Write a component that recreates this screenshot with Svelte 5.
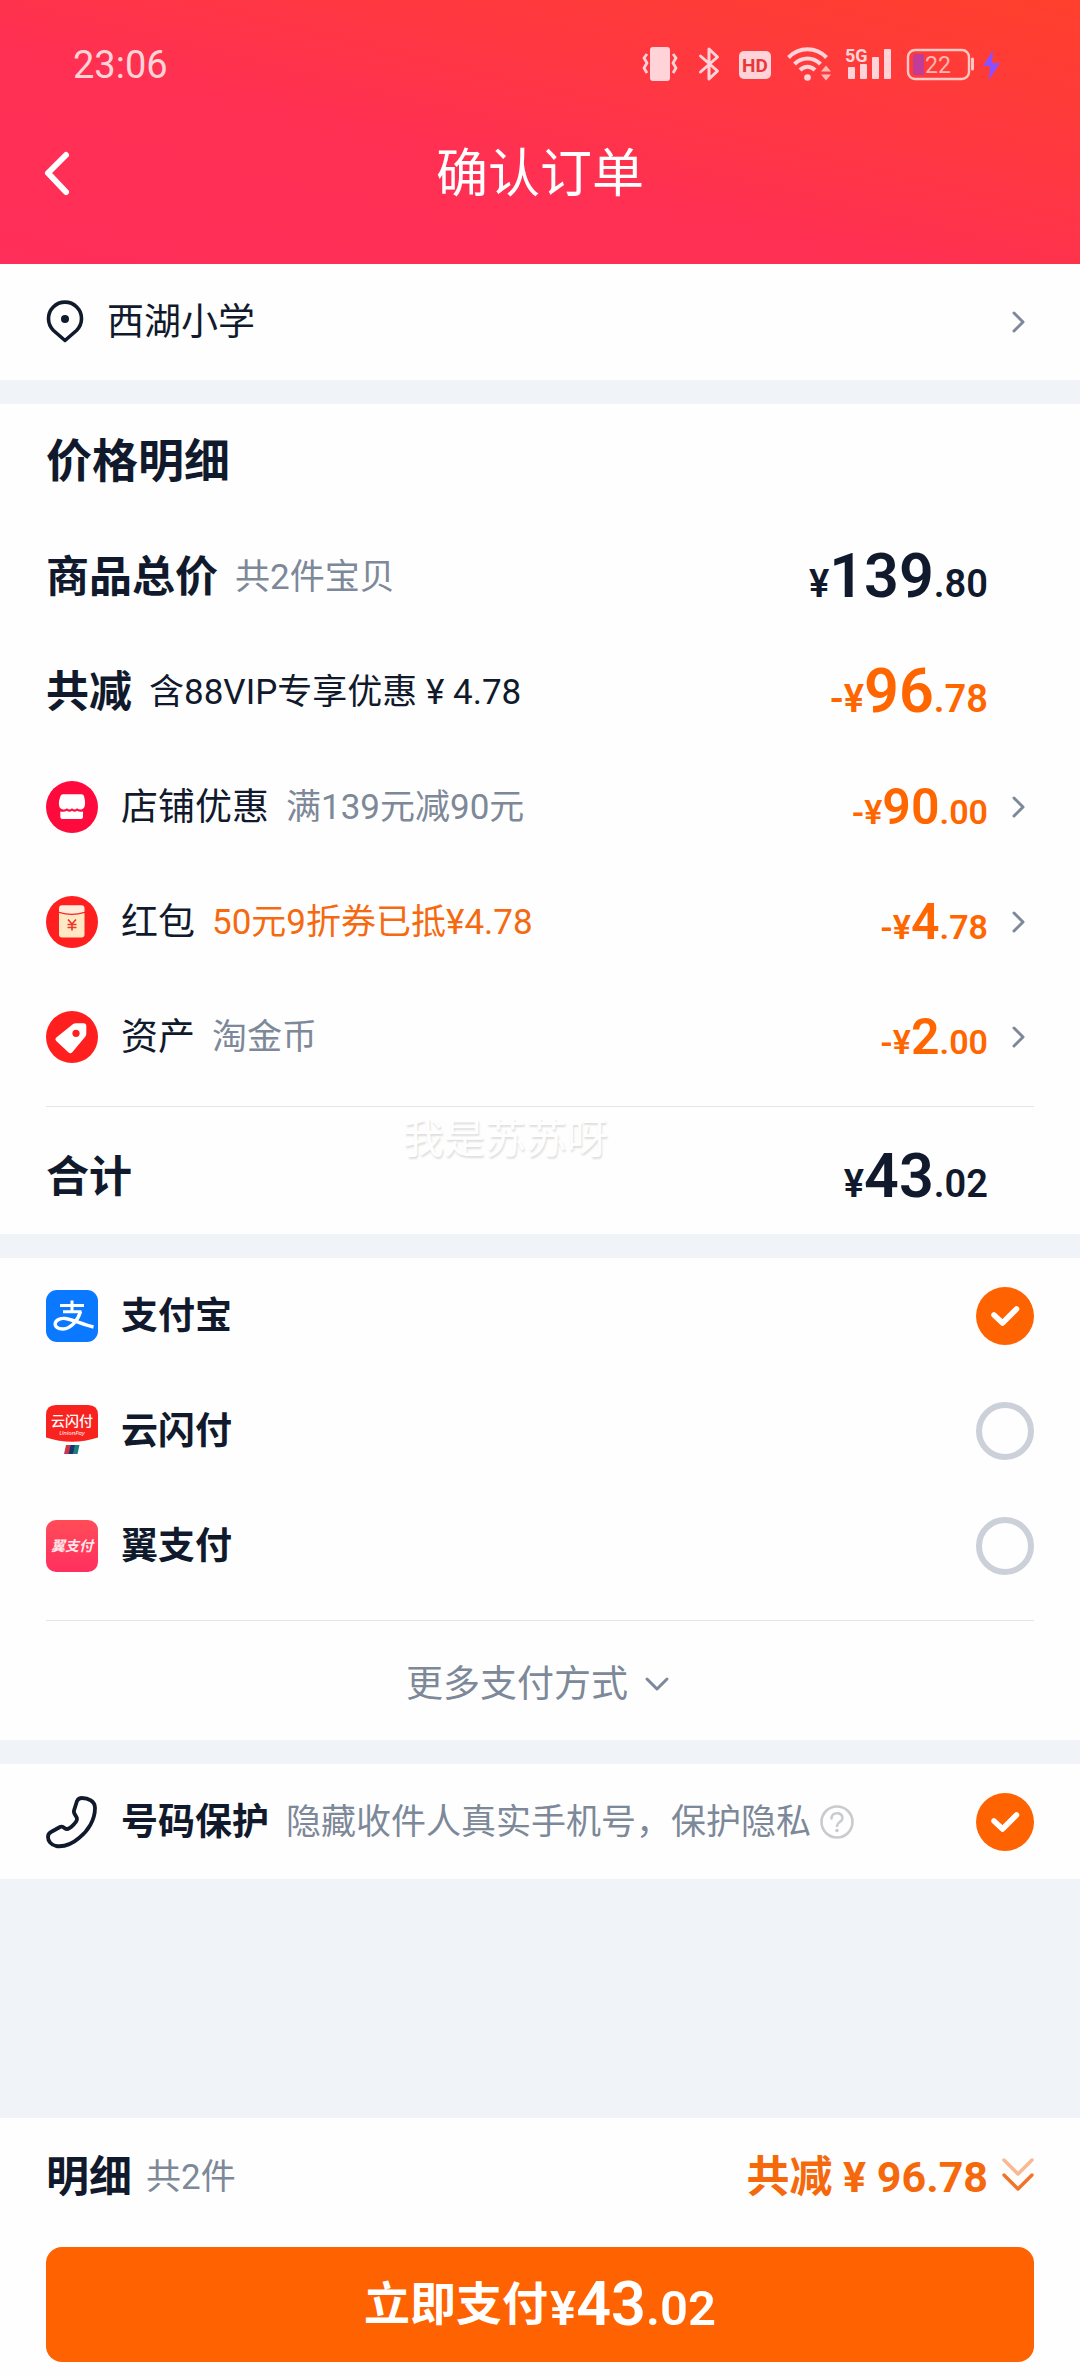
<script>
  const discounts = [
    { icon: 'shop', name: '店铺优惠', note: '满139元减90元', whole: '90', cents: '.00' },
    { icon: 'packet', name: '红包', note: '50元9折券已抵¥4.78', hot: true, whole: '4', cents: '.78' },
    { icon: 'tag', name: '资产', note: '淘金币', whole: '2', cents: '.00' }
  ];
  const methods = [
    { id: 'alipay', name: '支付宝' },
    { id: 'unionpay', name: '云闪付' },
    { id: 'bestpay', name: '翼支付' }
  ];
  let selected = $state('alipay');
  let protect = $state(true);
</script>

{#snippet chevron()}
  <svg class="chevron" viewBox="0 0 14 22" aria-hidden="true">
    <path d="M2 2l9 9-9 9" fill="none" stroke="#7d8898" stroke-width="3" stroke-linecap="round" stroke-linejoin="round" />
  </svg>
{/snippet}

<div class="page">
  <header>
    <div class="status">
      <time>23:06</time>
      <div class="indicators">
        <svg width="41" height="36" viewBox="0 0 41 36" aria-hidden="true">
          <rect x="8" y="1" width="20" height="34" rx="3" fill="#ffd3d7" />
          <path d="M5 8l-3 4 3 5-3 5 3 5M31 8l3 4-3 5 3 5-3 5" fill="none" stroke="#ffd3d7" stroke-width="2.800" stroke-linejoin="round" />
        </svg>
        <svg width="24" height="36" viewBox="0 0 24 36" aria-hidden="true">
          <path d="M1.500 10L18.500 25l-8.500 8V3l8.500 8L1.500 26" fill="none" stroke="#ffd3d7" stroke-width="3" stroke-linejoin="round" stroke-linecap="round" />
        </svg>
        <svg width="32" height="36" viewBox="0 0 32 36" aria-hidden="true">
          <rect y="5" width="32" height="28" rx="5" fill="#ffd3d7" />
          <text x="16" y="26" text-anchor="middle" font-family="Roboto" font-weight="700" font-size="19" fill="#e8383a">HD</text>
        </svg>
        <svg width="42" height="36" viewBox="0 0 42 36" aria-hidden="true">
          <g fill="none" stroke="#ffd3d7" stroke-width="4">
            <path d="M1.500 11.500C12 .5 29 .5 39.500 11.500" />
            <path d="M7.500 18C15 10.500 26 10.500 33.500 18" />
            <path d="M13 24C17.500 19.500 23.500 19.500 28 24" />
          </g>
          <circle cx="20.500" cy="31.500" r="3.300" fill="#ffd3d7" />
          <path d="M34 25.500l5-6 5 6zM34 28.500l5 6 5-6z" fill="#ffb9b4" />
        </svg>
        <svg width="46" height="36" viewBox="0 0 46 36" aria-hidden="true">
          <text x="0" y="16" font-family="Roboto" font-weight="700" font-size="18" fill="#ffd3d7">5G</text>
          <g fill="#ffd3d7">
            <rect x="3" y="21" width="7" height="12" rx="1" />
            <rect x="15" y="18" width="7" height="15" rx="1" />
            <rect x="27" y="11" width="7" height="22" rx="1" />
            <rect x="39" y="3" width="7" height="30" rx="1" />
          </g>
        </svg>
        <svg width="94" height="36" viewBox="0 0 94 36" aria-hidden="true">
          <rect x="1" y="4" width="61" height="29" rx="7" fill="none" stroke="#ffc8c4" stroke-width="2.400" />
          <path d="M65.500 13v10" stroke="#ffc8c4" stroke-width="3" stroke-linecap="round" />
          <path d="M8 8h9v21H8q-2 0-2-2V10q0-2 2-2z" fill="#c03c96" />
          <text x="31" y="27" text-anchor="middle" font-family="Roboto" font-size="23" fill="#ffb6b4">22</text>
          <path d="M86 4L76 20h7l-1 14 11-17h-8z" fill="#8a50ff" />
        </svg>
      </div>
    </div>
    <div class="nav">
      <button class="back" aria-label="返回">
        <svg width="28" height="48" viewBox="0 0 28 48" aria-hidden="true">
          <path d="M23 4L5 22l18 19" fill="none" stroke="#fff" stroke-width="6" stroke-linecap="round" stroke-linejoin="round" />
        </svg>
      </button>
      <h1>确认订单</h1>
    </div>
  </header>

  <button class="card row address">
    <svg class="pin" viewBox="0 0 38 42" aria-hidden="true">
      <path d="M19 39.500L7.500 29.500A16.500 16.500 0 1 1 30.500 29.500Z" fill="none" stroke="#111a2c" stroke-width="3.600" stroke-linejoin="round" />
      <circle cx="19" cy="18" r="4" fill="#111a2c" />
    </svg>
    <span class="text">西湖小学</span>
    <span class="end">{@render chevron()}</span>
  </button>

  <section class="card prices">
    <div class="row"><h2>价格明细</h2></div>
    <div class="row">
      <strong class="label">商品总价</strong>
      <span class="note">共2件宝贝</span>
      <span class="price large">¥<b>139</b>.80</span>
    </div>
    <div class="row">
      <strong class="label">共减</strong>
      <span class="note dark">含88VIP专享优惠 ¥ 4.78</span>
      <span class="price large hot">-¥<b>96</b>.78</span>
    </div>
    {#each discounts as d}
      <button class="row">
        <svg class="icon" viewBox="0 0 52 52" aria-hidden="true">
          {#if d.icon === 'shop'}
            <circle cx="26" cy="26" r="26" fill="#ff0a3c" />
            <path d="M17 13.300H35.500Q37.500 13.300 38 15L39 20Q39.600 27 36 28.200Q33 29 31 27.200Q28.500 29.600 26 27.200Q23.500 29.600 21 27.200Q19 29 16 28.200Q12.200 27 13 20L14.500 15Q15 13.300 17 13.300Z" fill="#fff" />
            <path d="M14.300 30.500Q18 31.500 21 29.800Q23.500 31.800 26 29.800Q28.500 31.800 31 29.800Q34 31.500 37 30.500V36Q37 38 35 38H16.300Q14.300 38 14.300 36Z" fill="#fff" />
          {:else if d.icon === 'packet'}
            <circle cx="26" cy="26" r="26" fill="#ff1f1f" />
            <path d="M13 17Q26 21 38.500 17V38.500Q38.500 41.500 35.500 41.500H16Q13 41.500 13 38.500Z" fill="#ffe9c4" />
            <path d="M16 9.300H35.500Q38.500 9.300 38.500 12.300V15.800Q26 19.500 13 15.800V12.300Q13 9.300 16 9.300Z" fill="#ffecdc" />
            <path d="M22 23.500l4 4.500 4-4.500M21.500 28.500h9M21.500 31.500h9M26 28v6.500" fill="none" stroke="#f0382a" stroke-width="1.700" />
          {:else}
            <circle cx="26" cy="26" r="26" fill="#ff1f1f" />
            <path d="M30 12.300H37.500Q40.300 12.300 40.300 15V22.500Q40.300 24.500 39 26L26.500 41Q24.500 43.300 22.300 41.200L10 29.800Q8.500 28 10.300 26.500L26.500 13.500Q28 12.300 30 12.300Z" fill="#fff" />
            <circle cx="30" cy="22.300" r="3.600" fill="#ff1f1f" />
          {/if}
        </svg>
        <span class="text">{d.name}</span>
        <span class="note" class:hot={d.hot}>{d.note}</span>
        <span class="price hot">-¥<b>{d.whole}</b>{d.cents}</span>
        <span class="end">{@render chevron()}</span>
      </button>
    {/each}
    <hr />
    <div class="row total">
      <strong class="label">合计</strong>
      <span class="price large">¥<b>43</b>.02</span>
      <span class="watermark">我是苏苏呀</span>
    </div>
  </section>

  <section class="card methods">
    {#each methods as m}
      <label class="row">
        <svg class="icon" viewBox="0 0 52 52" aria-hidden="true">
          {#if m.id === 'alipay'}
            <rect width="52" height="52" rx="11" fill="#0a78ff" />
            <g fill="none" stroke="#fff" stroke-width="3.400">
              <path d="M26 10.500V21M14 15.500H38M17 21.800H35.500" stroke-width="3" />
              <path d="M34.500 21.500C32 30 25 39 17 39C11.500 39 8.800 36.500 9.200 33.500C9.800 29.500 15 28 19.500 28.500C27 29.500 36 34.500 47.500 37" />
            </g>
          {:else if m.id === 'unionpay'}
            <path d="M10 0H42Q52 0 52 10V32.500Q26 41 0 32.500V10Q0 0 10 0Z" fill="#f8231f" />
            <text x="26" y="21" text-anchor="middle" font-family="'Noto Sans CJK SC'" font-weight="500" font-size="14" fill="#fff">云闪付</text>
            <text x="26" y="30" text-anchor="middle" font-family="'Open Sans'" font-style="italic" font-size="6" fill="#fff">UnionPay</text>
            <path d="M20 40h5l-2 9h-5z" fill="#c8384a" />
            <path d="M24.500 40h5l-2 9h-5z" fill="#1b3468" />
            <path d="M29 40h4.500l-2 9H27z" fill="#1a7f84" />
          {:else}
            <linearGradient id="bestpay" x2="0" y2="1">
              <stop stop-color="#ff4c58" />
              <stop offset="1" stop-color="#ff2f5f" />
            </linearGradient>
            <rect width="52" height="52" rx="10" fill="url(#bestpay)" />
            <text x="26" y="31" text-anchor="middle" font-family="'Noto Sans CJK SC'" font-weight="700" font-style="italic" font-size="14" fill="#ffe6ea">翼支付</text>
          {/if}
        </svg>
        <span class="text bold">{m.name}</span>
        <span class="tick">
          <input type="radio" name="method" value={m.id} bind:group={selected} />
          <svg viewBox="0 0 58 58" aria-hidden="true"><path d="M18 28l8.500 8L40.500 22" /></svg>
        </span>
      </label>
    {/each}
    <hr />
    <button class="more">
      更多支付方式
      <svg width="26" height="18" viewBox="0 0 26 18" aria-hidden="true">
        <path d="M3 3l10 10L23 3" fill="none" stroke="#7d8898" stroke-width="3" stroke-linecap="round" stroke-linejoin="round" />
      </svg>
    </button>
  </section>

  <section class="card row protect">
    <svg class="icon" viewBox="0 0 52 52" aria-hidden="true">
      <path d="M36 2C42 2 49 5 49 12C49 24 42 35 33 42C26 48 17 51 10 50C5 49 2 45 2 41C2 39 3 37 5 36L14 31C17 29.500 18.500 33 21 33C24 33 31 26 31 23C31 20 27 18 28 14.500L31 5C32 3 34 2 36 2Z" fill="none" stroke="#111a2c" stroke-width="3.800" stroke-linejoin="round" />
    </svg>
    <label class="text bold" for="protect">号码保护</label>
    <span class="note">隐藏收件人真实手机号，保护隐私</span>
    <button class="help" aria-label="说明">
      <svg width="36" height="36" viewBox="0 0 36 36" aria-hidden="true">
        <g fill="none" stroke="#c9cbcf" stroke-width="2.600" stroke-linecap="round">
          <circle cx="18" cy="18" r="15.500" />
          <path d="M12.500 14.500C12.500 7.500 23.500 7.500 23.500 14C23.500 18 18 18 18 22" />
        </g>
        <circle cx="18" cy="26.500" r="1.800" fill="#c9cbcf" />
      </svg>
    </button>
    <span class="tick">
      <input id="protect" type="checkbox" bind:checked={protect} />
      <svg viewBox="0 0 58 58" aria-hidden="true"><path d="M18 28l8.500 8L40.500 22" /></svg>
    </span>
  </section>

  <footer class="card">
    <button class="row summary">
      <strong class="label">明细</strong>
      <span class="note">共2件</span>
      <span class="saved">共减 ¥ 96.78</span>
      <svg width="32" height="36" viewBox="0 0 32 36" aria-hidden="true">
        <g fill="none" stroke="#f27428" stroke-width="3.400" stroke-linecap="round" stroke-linejoin="round">
          <path d="M2 2l14 14L30 2" opacity=".5" />
          <path d="M2 17l14 14L30 17" />
        </g>
      </svg>
    </button>
    <button class="pay">立即支付<span class="price">¥<b>43</b>.02</span></button>
  </footer>
</div>

<style>
  :global(body) {
    margin: 0;
  }
  .page {
    display: flex;
    flex-direction: column;
    gap: 24px;
    min-height: 100vh;
    background: #f0f4f8;
    color: #111a2c;
    font-family: Roboto, 'Noto Sans CJK SC', sans-serif;
    font-size: 37px;
    line-height: 1.2;
  }
  button {
    margin: 0;
    padding: 0;
    border: 0;
    background: none;
    color: inherit;
    font: inherit;
    text-align: left;
    cursor: pointer;
  }
  svg {
    flex: none;
    overflow: visible;
  }
  header {
    margin-bottom: -24px;
    padding-bottom: 42px;
    background: linear-gradient(to top right, #ff2e5a 0%, #ff3052 42%, #ff3742 65%, #ff402c 100%);
    color: #fff;
  }
  .status {
    display: flex;
    align-items: center;
    justify-content: space-between;
    height: 128px;
    padding: 0 79px 0 73px;
  }
  time {
    padding-top: 3px;
    color: #ffd3d7;
    font-size: 38px;
  }
  .indicators {
    display: flex;
    gap: 16px;
  }
  .nav {
    display: grid;
    grid-template-columns: 1fr auto 1fr;
    align-items: center;
    height: 94px;
    padding: 0 43px;
  }
  .nav svg {
    display: block;
  }
  .back {
    justify-self: start;
  }
  h1 {
    margin: 0;
    font-size: 52px;
    font-weight: 400;
  }
  .card {
    background: #fefefe;
  }
  .row {
    display: flex;
    align-items: center;
    gap: 17px;
    box-sizing: border-box;
    width: 100%;
    min-height: 115px;
    padding: 0 46px;
    white-space: nowrap;
  }
  .address {
    min-height: 116px;
    background: #fefefe;
  }
  .pin {
    width: 38px;
    height: 42px;
  }
  .address .text {
    margin-left: 6px;
  }
  h2 {
    margin: 0;
    font-size: 46px;
    font-weight: 700;
  }
  .label,
  .text,
  .note {
    padding-top: 3px;
  }
  .label {
    font-size: 43px;
    font-weight: 700;
  }
  .note {
    color: #7d8898;
    font-size: 35px;
  }
  .note.dark {
    color: #111a2c;
  }
  .note.hot {
    color: #f56a10;
  }
  .icon {
    width: 52px;
    height: 52px;
    margin-right: 6px;
  }
  .bold {
    font-weight: 700;
  }
  .price {
    margin-left: auto;
    font-size: 34px;
    font-weight: 600;
    line-height: 1;
  }
  .price b {
    font-size: 50px;
    font-weight: 600;
  }
  .large {
    margin-right: 46px;
    font-size: 38px;
  }
  .large b {
    font-size: 61px;
  }
  .price.hot {
    color: #ff6600;
  }
  .end {
    display: flex;
    justify-content: flex-end;
    width: 29px;
    margin-left: auto;
    padding-right: 8px;
    box-sizing: border-box;
  }
  .price + .end {
    margin-left: 0;
  }
  .chevron {
    width: 14px;
    height: 22px;
  }
  hr {
    height: 1px;
    margin: 12px 46px 11px;
    border: 0;
    background: #e3e5e9;
  }
  .total {
    position: relative;
    min-height: 116px;
  }
  .watermark {
    position: absolute;
    top: -3px;
    left: 403px;
    color: #fefefe;
    font-size: 41px;
    text-shadow: 1px 2px 2px #dededf;
  }
  .methods hr {
    margin: 17px 46px 0;
  }
  .more {
    display: flex;
    align-items: center;
    justify-content: center;
    gap: 16px;
    width: 100%;
    height: 119px;
    padding: 9px 4px 0 0;
    box-sizing: border-box;
    color: #7d8898;
  }
  .tick {
    display: grid;
    width: 58px;
    height: 58px;
    margin-left: auto;
  }
  .tick input,
  .tick svg {
    grid-area: 1 / 1;
    width: 58px;
    height: 58px;
    margin: 0;
  }
  .tick input {
    appearance: none;
    box-sizing: border-box;
    border: 6px solid #cbd0d9;
    border-radius: 50%;
  }
  .tick input:checked {
    border: 0;
    background: #ff6200;
  }
  .tick svg {
    display: none;
    fill: none;
    stroke: #fff;
    stroke-width: 5.500;
    stroke-linecap: round;
    stroke-linejoin: round;
    pointer-events: none;
  }
  .tick input:checked + svg {
    display: block;
  }
  .help {
    display: flex;
    margin-left: -9px;
  }
  footer {
    margin-top: auto;
    padding-bottom: 14px;
  }
  .summary {
    gap: 14px;
    min-height: 116px;
  }
  .saved {
    margin-left: auto;
    padding-top: 3px;
    color: #f5690c;
    font-size: 43px;
    font-weight: 700;
  }
  .pay {
    display: flex;
    align-items: center;
    justify-content: center;
    width: calc(100% - 92px);
    min-height: 115px;
    margin: 13px 46px 0;
    border-radius: 16px;
    background: #ff6200;
    color: #fff;
    font-size: 46px;
    font-weight: 700;
  }
  .pay .price {
    margin-left: 2px;
    font-size: 49px;
  }
  .pay .price b {
    font-size: 61px;
  }
</style>
